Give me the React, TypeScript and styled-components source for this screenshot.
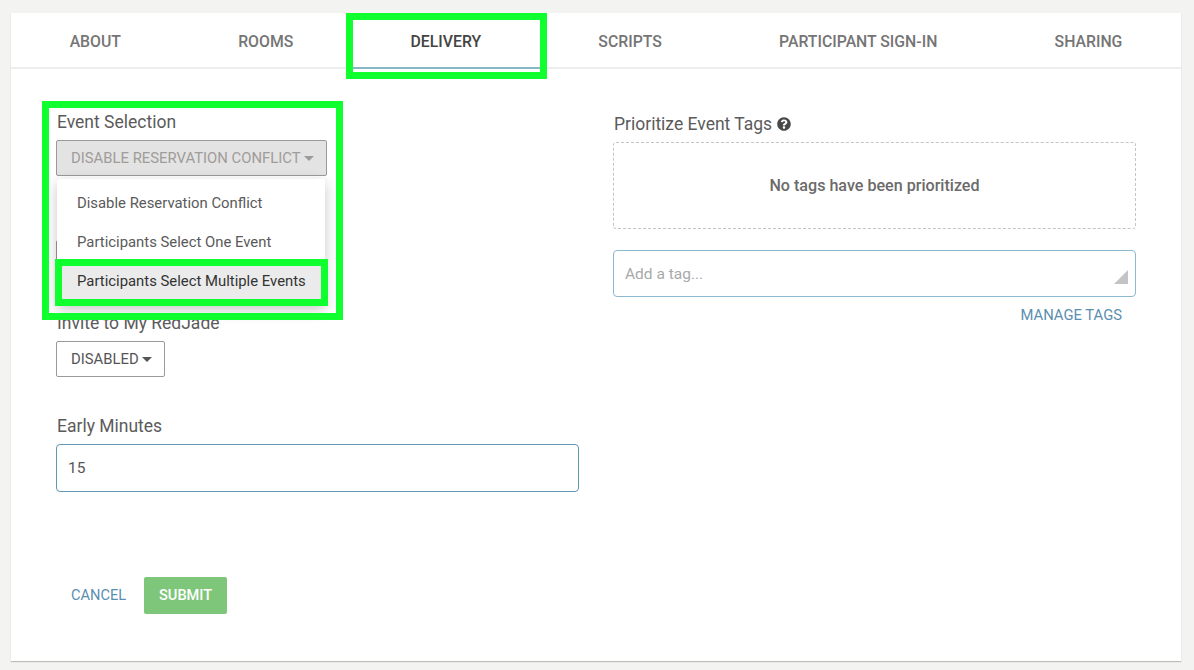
import React from "react";
import styled, { createGlobalStyle } from "styled-components";
import { FaQuestionCircle } from "react-icons/fa";

const Global = createGlobalStyle`
  html, body { margin: 0; padding: 0; background: #f3f3f1; }
  body { font-family: Roboto, "Liberation Sans", sans-serif; color: #555; height: 670px; overflow: hidden; }
  * { box-sizing: border-box; }
`;

const Page = styled.div`
  position: relative;
  width: 1194px;
  height: 670px;
  padding: 13px 13px 9px 11px;
`;

const Card = styled.main`
  height: 648px;
  background: #fff;
  box-shadow: 0 1px 1px rgba(0, 0, 0, 0.22);
`;

const Tabs = styled.nav`
  display: flex;
  height: 56px;
  border-bottom: 2px solid #eeeeee;
`;

const Tab = styled.a<{ $active?: boolean }>`
  flex: auto;
  height: 56px;
  display: flex;
  align-items: center;
  justify-content: center;
  padding-top: 2px;
  font-size: 15.8px;
  font-weight: 500;
  color: ${(p) => (p.$active ? "#444" : "#757575")};
  border-bottom: 2px solid ${(p) => (p.$active ? "#85b7c6" : "transparent")};
`;

const Form = styled.form`
  display: grid;
  grid-template-columns: 523px 523px;
  column-gap: 34px;
  padding: 43px 45px 0;
`;

const Column = styled.div`
  position: relative;
  display: flex;
  flex-direction: column;
`;

const Field = styled.div<{ $height: number }>`
  height: ${(p) => p.$height}px;
  display: flex;
  flex-direction: column;
  align-items: flex-start;
`;

const Label = styled.label`
  display: flex;
  align-items: center;
  gap: 5px;
  height: 20px;
  padding-left: 1px;
  font-size: 17.5px;
  line-height: 20px;
  color: #5b5b5b;
  margin-bottom: 8px;
`;

const Select = styled.button<{ $disabled?: boolean }>`
  height: 36px;
  padding: 0 12px 0 14px;
  display: flex;
  align-items: center;
  gap: 3px;
  border: 1px solid #9a9a9a;
  border-radius: 2px;
  font-family: inherit;
  font-size: 14.85px;
  color: ${(p) => (p.$disabled ? "#a09c9a" : "#555")};
  background: ${(p) => (p.$disabled ? "#e3e3e3" : "#fff")};
`;

const BlankSelect = styled(Select)`
  width: 120px;
`;

const Caret = styled.span<{ $light?: boolean }>`
  width: 0;
  height: 0;
  border-left: 5px solid transparent;
  border-right: 5px solid transparent;
  border-top: 5px solid ${(p) => (p.$light ? "#9c9c9c" : "#555")};
`;

const Menu = styled.ul`
  position: absolute;
  left: 1px;
  top: 67px;
  z-index: 2;
  width: 268px;
  margin: 0;
  padding: 4px 4px 6px;
  list-style: none;
  background: #fff;
  border-radius: 3px;
  box-shadow: 0 4px 14px rgba(0, 0, 0, 0.22);
`;

const MenuItem = styled.li<{ $active?: boolean }>`
  height: 39px;
  display: flex;
  align-items: center;
  padding-left: 16px;
  font-size: 14.87px;
  color: ${(p) => (p.$active ? "#333" : "#5a5a5a")};
  background: ${(p) => (p.$active ? "#ebebeb" : "transparent")};
`;

const Input = styled.div`
  width: 100%;
  height: 48px;
  display: flex;
  align-items: center;
  padding-left: 11px;
  border: 1px solid #5f97b5;
  border-radius: 4px;
  font-size: 15.5px;
  color: #555;
`;

const Actions = styled.div`
  display: flex;
  align-items: center;
  height: 37px;
  margin-top: 85px;
  gap: 18px;
  padding-left: 15px;
`;

const CancelLink = styled.a`
  padding-bottom: 2px;
  font-size: 14.6px;
  color: #5b8fb0;
`;

const ManageLink = styled.a`
  font-size: 14.8px;
  color: #5b8fb0;
`;

const Submit = styled.button`
  width: 83px;
  height: 37px;
  padding: 0 0 2px;
  border: 0;
  border-radius: 2px;
  background: #7dc67a;
  color: #fff;
  font-family: inherit;
  font-size: 14.6px;
  font-weight: 500;
`;

const RightColumn = styled(Column)`
  padding-top: 2px;
`;

const DropZone = styled.div`
  height: 87px;
  display: flex;
  align-items: center;
  justify-content: center;
  border: 1px dashed #c4c4c4;
  border-radius: 3px;
  font-size: 16.1px;
  font-weight: 500;
  color: #6b6b6b;
`;

const TagInput = styled.div`
  position: relative;
  height: 47px;
  margin-top: 21px;
  display: flex;
  align-items: center;
  padding-left: 11px;
  border: 1px solid #8db8cf;
  border-radius: 4px;
  font-size: 15.5px;
  color: #a9a9a9;
`;

const Grip = styled.svg`
  position: absolute;
  right: 7px;
  bottom: 12px;
`;

const ManageRow = styled.div`
  display: flex;
  justify-content: flex-end;
  padding: 9px 14px 0 0;
`;

const Highlight = styled.div<{ $x: number; $y: number; $w: number; $h: number; $t: number }>`
  position: absolute;
  left: ${(p) => p.$x}px;
  top: ${(p) => p.$y}px;
  width: ${(p) => p.$w}px;
  height: ${(p) => p.$h}px;
  border: ${(p) => p.$t}px solid #10ff2e;
  z-index: 5;
  pointer-events: none;
`;

const tabs = ["ABOUT", "ROOMS", "DELIVERY", "SCRIPTS", "PARTICIPANT SIGN-IN", "SHARING"];
const options = ["Disable Reservation Conflict", "Participants Select One Event", "Participants Select Multiple Events"];

export default function App() {
  return (
    <Page>
      <Global />
      <Card>
        <Tabs>
          {tabs.map((t) => (
            <Tab key={t} $active={t === "DELIVERY"}>{t}</Tab>
          ))}
        </Tabs>
        <Form>
          <Column>
            <Field $height={100}>
              <Label>Event Selection</Label>
              <Select type="button" $disabled>
                DISABLE RESERVATION CONFLICT <Caret $light />
              </Select>
            </Field>
            <Menu>
              {options.map((o, i) => (
                <MenuItem key={o} $active={i === 2}>{o}</MenuItem>
              ))}
            </Menu>
            <Field $height={101}>
              <Label />
              <BlankSelect type="button" />
            </Field>
            <Field $height={103}>
              <Label>Invite to My RedJade</Label>
              <Select type="button">
                DISABLED <Caret />
              </Select>
            </Field>
            <Field $height={76}>
              <Label>Early Minutes</Label>
              <Input>15</Input>
            </Field>
            <Actions>
              <CancelLink>CANCEL</CancelLink>
              <Submit type="button">SUBMIT</Submit>
            </Actions>
          </Column>
          <RightColumn>
            <Label>
              Prioritize Event Tags <FaQuestionCircle size={14} color="#484848" />
            </Label>
            <DropZone>No tags have been prioritized</DropZone>
            <TagInput>
              Add a tag...
              <Grip width="14" height="14" viewBox="0 0 14 14">
                <polygon points="14,0 14,14 0,14" fill="#c4c4c4" />
              </Grip>
            </TagInput>
            <ManageRow>
              <ManageLink>MANAGE TAGS</ManageLink>
            </ManageRow>
          </RightColumn>
        </Form>
      </Card>
      <Highlight $x={346} $y={13} $w={201} $h={66} $t={7} />
      <Highlight $x={42} $y={101} $w={301} $h={219} $t={7} />
      <Highlight $x={55} $y={259} $w={273} $h={47} $t={7} />
    </Page>
  );
}
